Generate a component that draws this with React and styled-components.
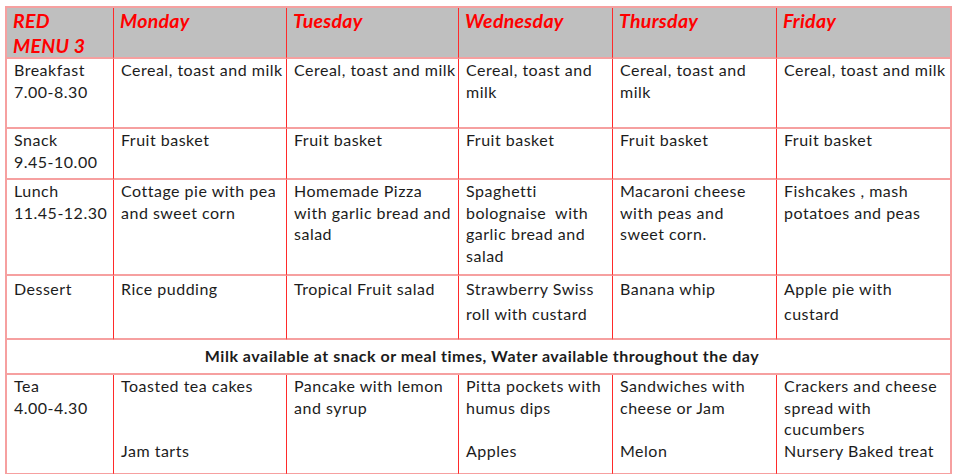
import styled, { createGlobalStyle } from "styled-components";

const Global = createGlobalStyle`
  html, body { margin: 0; padding: 0; background: #fff; }
  body { font-family: Lato, "Open Sans", sans-serif; }
`;

const Page = styled.div`
  padding: 6px 0 0 5px;
`;

const Grid = styled.div`
  display: grid;
  grid-template-columns: 107px 173px 172px 154px 164px 175px;
  grid-template-rows: 51px 70px 51px 96px 64px 35px 100px;
  width: 947px;
  border-top: 2px solid #f6a0a0;
  border-left: 2px solid #f6a0a0;
  box-sizing: border-box;
`;

const Cell = styled.div`
  box-sizing: border-box;
  border-right: ${p => (p.$last ? "2px solid #f6a0a0" : "1px solid #ff2a2a")};
  border-bottom: 2px solid #f6a0a0;
  padding: ${p => (p.$head ? "0 6px" : "0 0 0 7px")};
  background: ${p => (p.$head ? "#bfbfbf" : "#fff")};
  color: ${p => (p.$head ? "#ff0000" : "#1c1c1c")};
  font-size: ${p => (p.$head ? "19.5px" : "16px")};
  letter-spacing: ${p => (p.$head ? "0.3px" : "0.5px")};
  font-weight: ${p => (p.$head || p.$note ? 700 : 400)};
  font-style: ${p => (p.$head ? "italic" : "normal")};
  line-height: ${p => (p.$head ? "25px" : p.$loose ? "25px" : "21.7px")};
  grid-column: ${p => (p.$note ? "1 / -1" : "auto")};
  text-align: ${p => (p.$note ? "center" : "left")};
  white-space: pre-line;
  ${p => p.$note && "padding-top: 5px;"}
`;

const days = ["Monday", "Tuesday", "Wednesday", "Thursday", "Friday"];

const rows = [
  {
    label: "Breakfast\n7.00-8.30",
    items: [
      "Cereal, toast and milk",
      "Cereal, toast and milk",
      "Cereal, toast and\nmilk",
      "Cereal, toast and\nmilk",
      "Cereal, toast and milk",
    ],
  },
  {
    label: "Snack\n9.45-10.00",
    items: ["Fruit basket", "Fruit basket", "Fruit basket", "Fruit basket", "Fruit basket"],
  },
  {
    label: "Lunch\n11.45-12.30",
    items: [
      "Cottage pie with pea\nand sweet corn",
      "Homemade Pizza\nwith garlic bread and\nsalad",
      "Spaghetti\nbolognaise\u00a0 with\ngarlic bread and\nsalad",
      "Macaroni cheese\nwith peas and\nsweet corn.",
      "Fishcakes , mash\npotatoes and peas",
    ],
  },
  {
    label: "Dessert",
    loose: true,
    items: [
      "Rice pudding",
      "Tropical Fruit salad",
      "Strawberry Swiss\nroll with custard",
      "Banana whip",
      "Apple pie with\ncustard",
    ],
  },
];

const tea = {
  label: "Tea\n4.00-4.30",
  items: [
    "Toasted tea cakes\n\n\nJam tarts",
    "Pancake with lemon\nand syrup",
    "Pitta pockets with\nhumus dips\n\nApples",
    "Sandwiches with\ncheese or Jam\n\nMelon",
    "Crackers and cheese\nspread with\ncucumbers\nNursery Baked treat",
  ],
};

const Row = ({ row }) => (
  <>
    <Cell $loose={row.loose}>{row.label}</Cell>
    {row.items.map((t, i) => (
      <Cell key={i} $loose={row.loose} $last={i === row.items.length - 1}>
        {t}
      </Cell>
    ))}
  </>
);

export default function App() {
  return (
    <Page>
      <Global />
      <Grid>
        <Cell $head>{"RED\nMENU 3"}</Cell>
        {days.map((d, i) => (
          <Cell $head key={d} $last={i === days.length - 1}>
            {d}
          </Cell>
        ))}
        {rows.map(r => (
          <Row key={r.label} row={r} />
        ))}
        <Cell $note $last>
          Milk available at snack or meal times, Water available throughout the day
        </Cell>
        <Row row={tea} />
      </Grid>
    </Page>
  );
}
